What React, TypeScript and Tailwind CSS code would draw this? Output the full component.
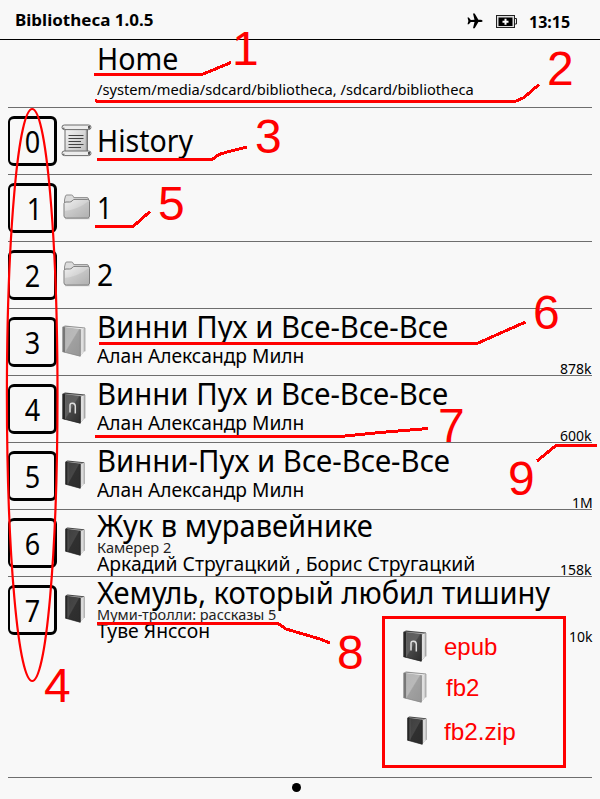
import { useLayoutEffect, useRef } from "react";

/** One line of text, stretched or squeezed sideways to a given width. */
function Fit({ w, className = "", children }: { w: number; className?: string; children: string }) {
  const ref = useRef<HTMLSpanElement>(null);
  useLayoutEffect(() => {
    const apply = () => {
      const el = ref.current;
      if (el) el.style.transform = `scaleX(${w / el.offsetWidth})`;
    };
    apply();
    document.fonts?.ready.then(apply);
  }, [w]);
  return (
    <div className={className}>
      <span ref={ref} className="inline-block origin-left whitespace-pre align-top">
        {children}
      </span>
    </div>
  );
}

type BookKind = "epub" | "fb2" | "zip";

function Book({ kind }: { kind: BookKind }) {
  const light = kind === "fb2";
  const id = `cover-${kind}`;
  const size = kind === "zip" ? "h-[29px] w-[20px]" : "h-[32px] w-[24px]";
  return (
    <svg viewBox="0 0 24 32" preserveAspectRatio="none" className={`${size} shrink-0`}>
      <defs>
        <linearGradient id={id} x1="0" y1="0" x2="1" y2="1">
          <stop offset="0" stopColor={light ? "#b4b4b4" : kind === "epub" ? "#5c5c5c" : "#3d3d3d"} />
          <stop offset="0.48" stopColor={light ? "#b9b9b9" : kind === "epub" ? "#606060" : "#464646"} />
          <stop offset="0.52" stopColor={light ? "#a0a0a0" : kind === "epub" ? "#474747" : "#303030"} />
          <stop offset="1" stopColor={light ? "#969696" : "#2c2c2c"} />
        </linearGradient>
      </defs>
      <path d="M1 1.5 3 .5 23 2.5V26l-5 5z" fill={light ? "#929292" : "#454545"} />
      <path d="M18.5 4.5 22.8 3v23.5l-4.3 4z" fill="#efefef" />
      <path d="M20 4.5v24M21.5 4v23" stroke="#b9b9b9" strokeWidth=".6" />
      <path d="M22.9 3v23.3" stroke="#777" strokeWidth=".7" />
      <path d="M2.5 1.7 22 3.2 18 4.8 3 2.8z" fill={light ? "#e7e7e7" : "#a5a5a5"} />
      <path d="M.5 1.8 18.5 4.2V31.5L.5 26.7z" fill={`url(#${id})`} />
      <path d="M.5 1.8 3.2 2.2V27.4L.5 26.7z" fill={light ? "#777" : "#272727"} />
      <path d="M3.5 2.7V27" stroke={light ? "#bbb" : "#777"} strokeWidth=".5" />
      <path d="M.5 26.7 18.2 31.2V4.5" fill="none" stroke={light ? "#858585" : "#242424"} strokeWidth=".7" />
      {kind === "epub" && (
        <path d="M8 20.5v-7.2q0-2.4 2.6-2.1 2.7.3 2.7 3v7.4" fill="none" stroke="#dedede" strokeWidth="1.5" />
      )}
    </svg>
  );
}

function Folder() {
  return (
    <svg viewBox="0 0 28 26" className="h-[26px] w-[28px] shrink-0">
      <defs>
        <linearGradient id="folder" x1="0" y1="0" x2="1" y2="1">
          <stop offset="0" stopColor="#f1f1f1" />
          <stop offset=".5" stopColor="#d3d3d3" />
          <stop offset="1" stopColor="#b2b2b2" />
        </linearGradient>
      </defs>
      <path d="M1.5 6 2.5 1.8Q2.8 1 4 1h4.5q1 0 1.5 1l.8 1.6H24q1.4 0 1.5 1.5V9h-24z" fill="#dcdcdc" stroke="#8f8f8f" />
      <path d="M1 9.5Q1.2 8 3 8h3.5Q8 8 9 7l.8-.9Q10.5 5.4 12 5.4h12.8q1.7 0 1.7 1.8V22q0 2-2 2h-21Q1 24 1 22z" fill="url(#folder)" stroke="#7d7d7d" />
      <path d="M2 17Q16 15 25.8 7v15q0 1.5-1.5 1.5H3.5Q2 23.5 2 22z" fill="#a9a9a9" opacity=".3" />
      <path d="M2 24.7h24.5" stroke="#777" strokeWidth=".8" opacity=".6" />
    </svg>
  );
}

function Scroll() {
  return (
    <svg viewBox="0 0 31 33" className="h-[33px] w-[31px] shrink-0">
      <defs>
        <linearGradient id="paper" x1="0" y1="0" x2="1" y2="1">
          <stop offset="0" stopColor="#f6f6f6" />
          <stop offset="1" stopColor="#bdbdbd" />
        </linearGradient>
      </defs>
      <path d="M4 3.5h22.5v25H4z" fill="url(#paper)" stroke="#6c6c6c" />
      <path d="M25.5 5v22" stroke="#999" strokeWidth="1.4" />
      <rect x="1" y="1" width="29" height="4.6" rx="2.3" fill="#ededed" stroke="#6c6c6c" />
      <rect x="1" y="27" width="29" height="4.6" rx="2.3" fill="#ededed" stroke="#6c6c6c" />
      <path d="M27 2h2v2.7h-2zM27 28h2v2.7h-2zM2 3.8h1.5v1H2zM2 29.8h1.5v1H2z" fill="#555" />
      <path d="M7.5 11.5h15M7.5 14.5h15M7.5 17.5h12.5M7.5 20.5h15M7.5 23.5h12.5" stroke="#444" />
    </svg>
  );
}

function Key({ n }: { n: string }) {
  return (
    <div className="flex h-[66px] w-[49px] shrink-0 flex-col pt-[7.5px]">
      <div className="flex h-[50px] items-center justify-center rounded-[6px] border-[3px] border-l-2 border-black pt-[2px] text-[30px] leading-[42px]">
        <span className={n === "1" ? "ml-[6px] scale-x-90" : "ml-px scale-x-90"}>{n}</span>
      </div>
    </div>
  );
}

type Line = [text: string, width: number];
type Item = { icon: "scroll" | "folder" | BookKind; title: Line; series?: Line; author?: Line; size?: Line };

const pooh: Line = ["Винни Пух и Все-Все-Все", 351];
const milne: Line = ["Алан Александр Милн", 207];

const items: Item[] = [
  { icon: "scroll", title: ["History", 96] },
  { icon: "folder", title: ["1", 15] },
  { icon: "folder", title: ["2", 16] },
  { icon: "fb2", title: pooh, author: milne, size: ["878k", 32] },
  { icon: "epub", title: pooh, author: milne, size: ["600k", 32] },
  { icon: "zip", title: ["Винни-Пух и Все-Все-Все", 353], author: milne, size: ["1M", 21] },
  {
    icon: "zip",
    title: ["Жук в муравейнике", 276],
    series: ["Камерер 2", 74],
    author: ["Аркадий Стругацкий , Борис Стругацкий", 378],
    size: ["158k", 32],
  },
  {
    icon: "zip",
    title: ["Хемуль, который любил тишину", 453],
    series: ["Муми-тролли: рассказы 5", 179],
    author: ["Туве Янссон", 113],
    size: ["10k", 24],
  },
];

function Icon({ kind }: { kind: Item["icon"] }) {
  if (kind === "scroll") return <div className="pl-1 pt-[15.5px]"><Scroll /></div>;
  if (kind === "folder") return <div className="pl-[6px] pt-[18.5px]"><Folder /></div>;
  if (kind === "zip") return <div className="pl-[7.5px] pt-[16.5px]"><Book kind={kind} /></div>;
  return <div className="pl-[5px] pt-[15.5px]"><Book kind={kind} /></div>;
}

function Row({ item, n }: { item: Item; n: number }) {
  const titleClass = item.series
    ? "h-[31px] text-[30px] leading-[31px]"
    : item.author
      ? "h-[35px] text-[30px] leading-[35px]"
      : "mt-[15px] h-[35px] text-[30px] leading-[35px]";
  return (
    <div className={`flex h-[67px] border-b ${n === 7 ? "border-transparent" : "border-[#6e6e6e]"}`}>
      <Key n={String(n)} />
      <div className="w-10 shrink-0">
        <Icon kind={item.icon} />
      </div>
      <div className="min-w-0 flex-1">
        <Fit w={item.title[1]} className={titleClass}>{item.title[0]}</Fit>
        {item.series && (
          <Fit w={item.series[1]} className="h-[14px] text-[14px] leading-[14px] text-[#222]">{item.series[0]}</Fit>
        )}
        {item.author && (
          <Fit
            w={item.author[1]}
            className={item.series ? "h-[19px] text-[19px] leading-[19px]" : "h-[25px] text-[19px] leading-[25px]"}
          >
            {item.author[0]}
          </Fit>
        )}
      </div>
      {item.size && (
        <div className={`shrink-0 self-end ${item.size[0] === "1M" ? "w-[20px]" : item.size[0] === "10k" ? "w-[23px]" : "w-[32px]"}`}>
          <Fit w={item.size[1]} className="h-[14px] text-[14px] leading-[16px]">{item.size[0]}</Fit>
        </div>
      )}
    </div>
  );
}

function Mark({ n, at }: { n: string; at: string }) {
  return <span className={`absolute text-[48px] leading-[48px] ${at}`}>{n}</span>;
}

function Annotations() {
  return (
    <div className="pointer-events-none absolute inset-0 font-['Liberation_Sans',Arial,sans-serif] text-[#ff0000]">
      <svg viewBox="0 0 600 799" className="absolute inset-0 h-[799px] w-[600px]" fill="none" stroke="#ff0000" strokeWidth="3">
        <ellipse cx="32.2" cy="395" rx="25.3" ry="286" strokeWidth="2.2" />
        <g shapeRendering="crispEdges">
          <path d="M94 74.5H202L231 62.5" />
          <path d="M95 100 97 101.5H515L524 97.5 539 84.5" />
          <path d="M97 159.5H212L219 154.5 229 151.5 247 147" />
          <path d="M95 226.5H133L150 211.5" />
          <path d="M99 343.5H477L525.5 322" />
          <path d="M95 436.5H340L380 432.5 428 428.5" />
          <path d="M97 623.5H278L286 629 320 639 330 643" />
          <path d="M597 445.5H556L537 461" />
        </g>
      </svg>
      <Mark n="1" at="left-[232px] top-[25px]" />
      <Mark n="2" at="left-[547px] top-[45px]" />
      <Mark n="3" at="left-[255px] top-[113px]" />
      <Mark n="4" at="left-[44px] top-[662px]" />
      <Mark n="5" at="left-[158px] top-[180px]" />
      <Mark n="6" at="left-[533px] top-[289px]" />
      <Mark n="7" at="left-[438px] top-[402px]" />
      <Mark n="8" at="left-[337px] top-[629px]" />
      <Mark n="9" at="left-[508px] top-[455px]" />
      <div className="absolute left-[382px] top-[616px] flex h-[152px] w-[184px] flex-col border-[3px] border-[#ff0000] pl-[18px] pt-[10.5px] text-[24px] leading-[28px]">
        <div className="flex h-[41.5px]">
          <Book kind="epub" />
          <Fit w={53} className="ml-[17px] pt-[3px]">epub</Fit>
        </div>
        <div className="flex h-[44.5px]">
          <Book kind="fb2" />
          <Fit w={33} className="ml-[19px] pt-[3px]">fb2</Fit>
        </div>
        <div className="flex pl-[4px]">
          <Book kind="zip" />
          <Fit w={72} className="ml-[17px] pt-[2px]">fb2.zip</Fit>
        </div>
      </div>
    </div>
  );
}

export default function App() {
  return (
    <div className="relative flex h-[799px] w-[600px] flex-col overflow-hidden bg-[#f8f8f8] font-['Noto_Sans','Open_Sans',sans-serif] text-black">
      <header className="flex h-10 shrink-0 border-b border-black pl-[15px] font-bold">
        <Fit w={138} className="flex-1 pt-[9px] text-[16px] leading-[22px]">Bibliotheca 1.0.5</Fit>
        <svg viewBox="0 0 16 16" className="mr-[13px] mt-[13px] h-4 w-4">
          <path d="M.5 4.5h1.3l2 2.4 3.7-.2L6 .5h1.7l3.7 6.2 2.6.1q1.6.4 1.6 1.1T14 9l-2.6.1-3.7 6.2H6l1.5-6.2-3.7-.2-2 2.4H.5l.9-3.4z" />
        </svg>
        <svg viewBox="0 0 22 14" className="mt-[14px] h-[14px] w-[22px]">
          <rect x=".5" y="1.5" width="18" height="12" fill="#ddd" stroke="#222" />
          <path d="M2.5 3.5h14v8.5h-14z" />
          <path d="M19 4.5h1.5v5.5H19" fill="#eee" stroke="#222" />
          <path d="M9.5 4.7v6M6.5 7.7h6" stroke="#fff" strokeWidth="2" />
        </svg>
        <Fit w={41} className="ml-[11px] w-[71px] pt-[11px] text-[16px] leading-[22px]">13:15</Fit>
      </header>
      <main className="flex-1 px-2">
        <div className="h-[68px] border-b border-[#6e6e6e] pl-[89px]">
          <Fit w={81} className="h-[37px] text-[30px] leading-[37px]">Home</Fit>
          <Fit w={377} className="h-[25px] text-[14px] leading-[25px]">
            /system/media/sdcard/bibliotheca, /sdcard/bibliotheca
          </Fit>
        </div>
        {items.map((item, n) => (
          <Row key={n} item={item} n={n} />
        ))}
      </main>
      <footer className="mx-2 flex h-[22px] shrink-0 justify-center border-t border-[#6e6e6e] pr-2 pt-[4.5px]">
        <div className="size-[9px] rounded-full bg-black" />
      </footer>
      <Annotations />
    </div>
  );
}
